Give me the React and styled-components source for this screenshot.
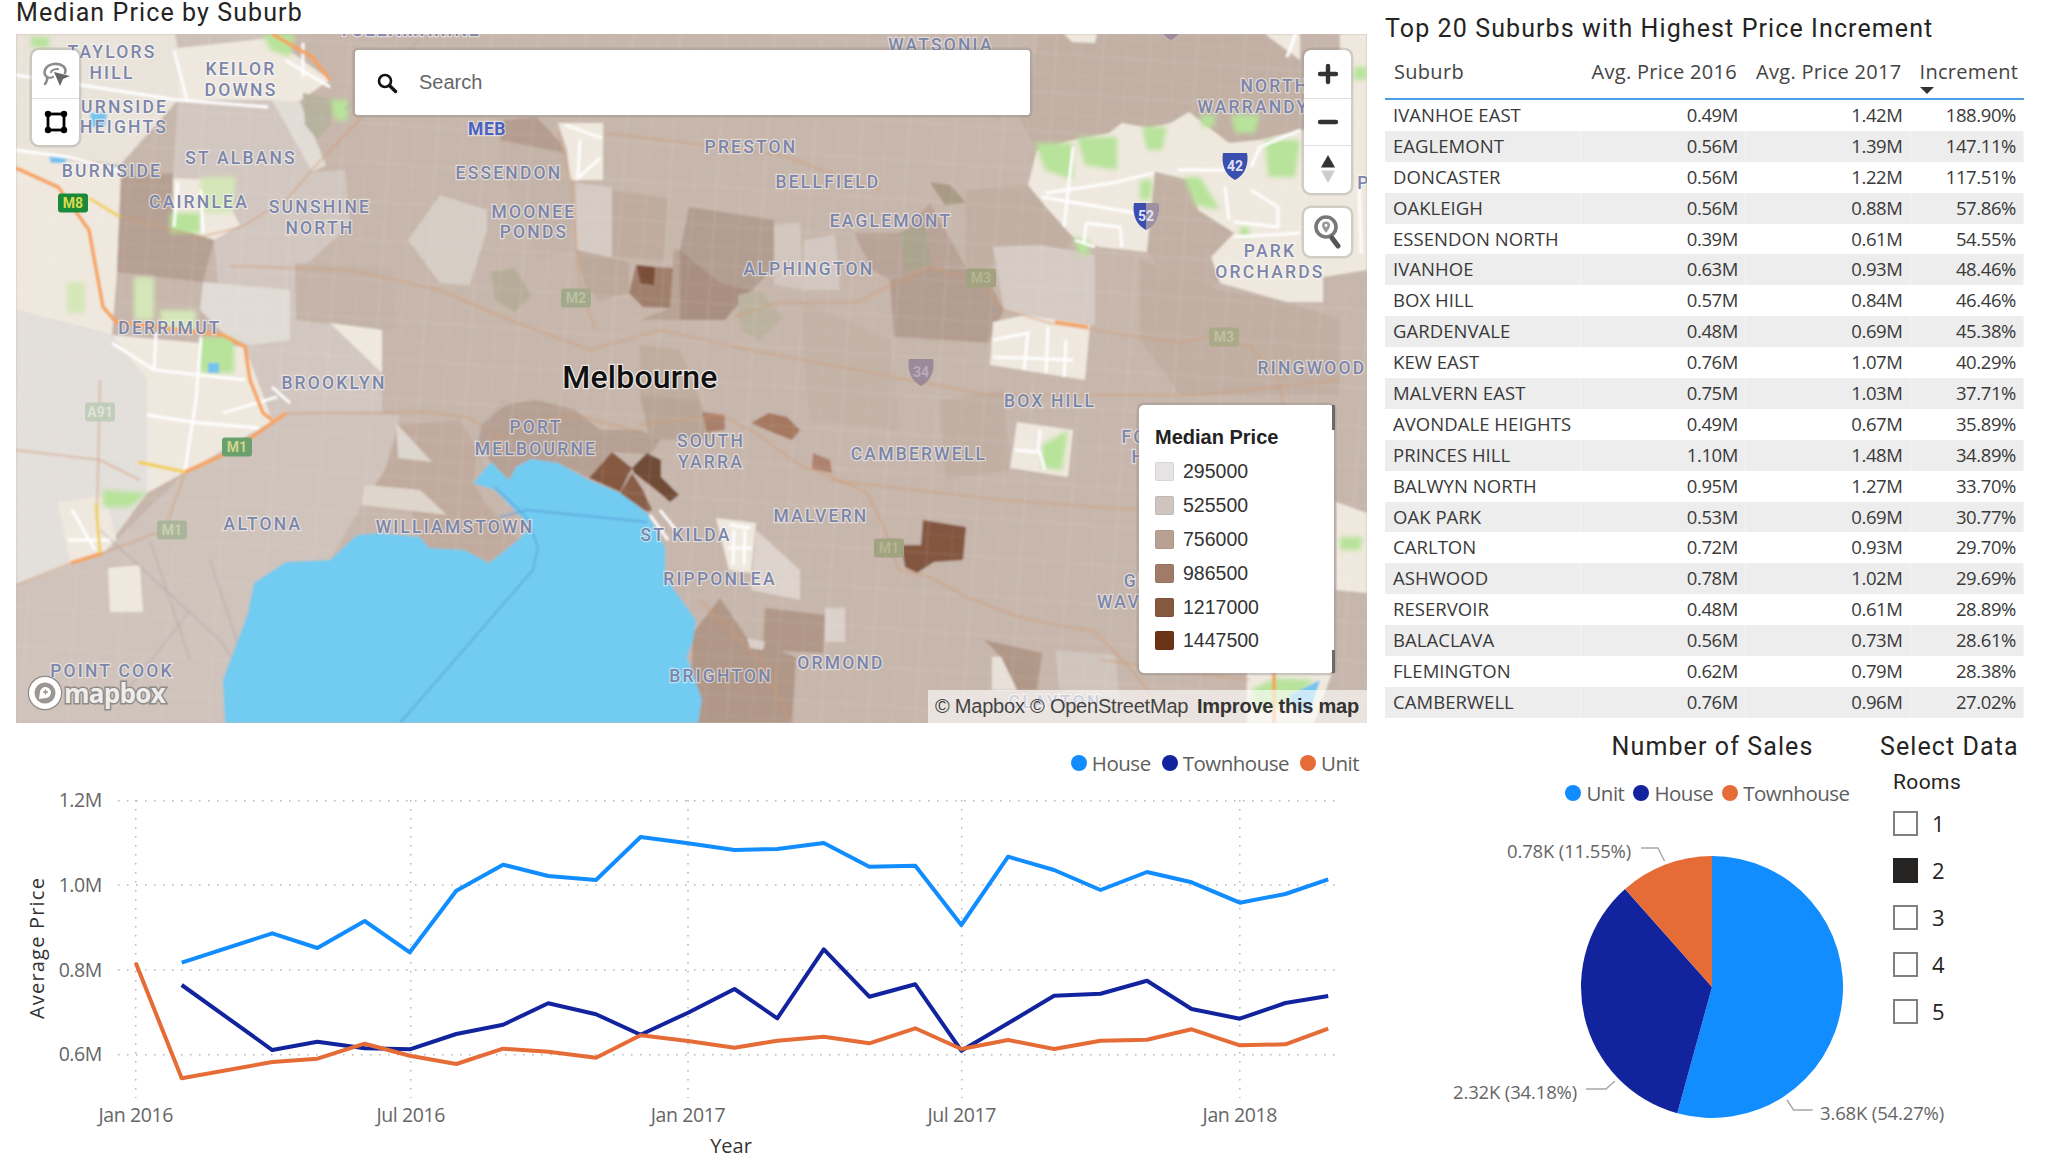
import React from 'react';
import styled, { createGlobalStyle } from 'styled-components';

const GlobalStyle = createGlobalStyle`
  html, body {
    margin: 0;
    padding: 0;
    background: #fff;
    font-family: "Open Sans", "Liberation Sans", sans-serif;
  }
`;

const HOUSE = '#118dff';
const NAVY = '#12239e';
const ORANGE = '#e66c37';

const suburbs = [
  ['IVANHOE EAST', '0.49M', '1.42M', '188.90%'],
  ['EAGLEMONT', '0.56M', '1.39M', '147.11%'],
  ['DONCASTER', '0.56M', '1.22M', '117.51%'],
  ['OAKLEIGH', '0.56M', '0.88M', '57.86%'],
  ['ESSENDON NORTH', '0.39M', '0.61M', '54.55%'],
  ['IVANHOE', '0.63M', '0.93M', '48.46%'],
  ['BOX HILL', '0.57M', '0.84M', '46.46%'],
  ['GARDENVALE', '0.48M', '0.69M', '45.38%'],
  ['KEW EAST', '0.76M', '1.07M', '40.29%'],
  ['MALVERN EAST', '0.75M', '1.03M', '37.71%'],
  ['AVONDALE HEIGHTS', '0.49M', '0.67M', '35.89%'],
  ['PRINCES HILL', '1.10M', '1.48M', '34.89%'],
  ['BALWYN NORTH', '0.95M', '1.27M', '33.70%'],
  ['OAK PARK', '0.53M', '0.69M', '30.77%'],
  ['CARLTON', '0.72M', '0.93M', '29.70%'],
  ['ASHWOOD', '0.78M', '1.02M', '29.69%'],
  ['RESERVOIR', '0.48M', '0.61M', '28.89%'],
  ['BALACLAVA', '0.56M', '0.73M', '28.61%'],
  ['FLEMINGTON', '0.62M', '0.79M', '28.38%'],
  ['CAMBERWELL', '0.76M', '0.96M', '27.02%']
];

const priceLegend = [
  ['295000', '#e6e4e2'],
  ['525500', '#cfc4be'],
  ['756000', '#b8a193'],
  ['986500', '#a07c68'],
  ['1217000', '#855840'],
  ['1447500', '#6c3317']
];

const months = [
  135.7, 181.7, 272.3, 317.4, 364.7, 409.8, 456.3, 503.1, 548.2, 596, 640.6,
  688, 734.5, 777.3, 823.8, 869.3, 915.3, 961.3, 1008.1, 1054.1, 1100.5, 1147,
  1191.6, 1239.8, 1285.4, 1328.2
];

const housePrices = [
  null, 962.7, 933.3, 948, 921, 952.3, 890.7, 864.7, 876, 880, 837, 843.3, 850,
  849, 843, 866.7, 865.7, 925, 856.7, 870, 890, 872, 882.3, 902.7, 894, 879.3
];
const townhousePrices = [
  null, 985, 1050, 1041.7, 1048.3, 1049.3, 1034, 1024.7, 1003.3, 1014.3,
  1034.7, 1012.7, 989, 1018.3, 949.3, 996.7, 984.3, 1050.7, 1023.3, 995.7,
  993.7, 980.7, 1009, 1018.7, 1003, 996
];
const unitPrices = [
  962.7, 1078.3, 1062, 1058.7, 1043.7, 1055.7, 1064, 1048.7, 1051.7, 1057.7,
  1035.3, 1041, 1047.7, 1040.7, 1036.7, 1043.3, 1028.3, 1049, 1040, 1049,
  1040.7, 1039.7, 1029.3, 1045.3, 1044.3, 1028.7
];

const toPoints = values =>
  values
    .map((y, i) => (y === null ? null : `${months[i]},${y}`))
    .filter(Boolean)
    .join(' ');

// [fill, polygon] in page pixels, painted back to front
const mapPatches = [
  ['#e9e3da', '16,34 185,34 178,100 120,165 16,150'],
  ['#cdc1b7', '175,34 272,34 300,60 178,50'],
  ['#efe8de', '178,48 272,38 330,80 292,106 178,100'],
  ['#efe8de', '16,150 121,170 117,272 112,335 16,310'],
  ['#e3dfda', '16,310 112,335 147,380 147,493 103,553 16,585'],
  ['#efe8de', '112,335 245,347 285,413 225,455 185,472 147,493 147,380'],
  ['#efe8de', '58,502 105,496 120,553 70,563'],
  ['#cfc3bb', '16,585 103,553 186,472 286,413 400,415 385,470 362,505 330,560 286,562 254,583 248,613 223,680 225,723 16,723'],
  ['#efe8de', '108,568 140,565 143,612 110,612'],
  ['#d2c7c0', '178,100 272,100 312,172 345,170 350,225 300,270 296,320 382,330 382,413 286,413 272,420 245,347 223,335 214,240 173,227 173,173'],
  ['#e1dbd6', '203,282 290,290 290,340 250,345 225,335 200,310'],
  ['#e1dcd6', '272,100 300,102 326,165 312,172'],
  ['#b7b29e', '303,93 335,100 330,125 318,140 305,125'],
  ['#efe8de', '173,178 215,180 240,225 214,240 173,227'],
  ['#b5a093', '121,177 173,173 173,227 214,240 203,282 117,272'],
  ['#c4b3a8', '295,263 392,268 395,330 330,323 296,320'],
  ['#efe8de', '330,323 382,330 382,373'],
  ['#d6cdc5', '408,240 440,195 487,210 487,230 470,285 440,283'],
  ['#d5cbc4', '576,183 612,187 612,257 576,250'],
  ['#c0ac9f', '612,190 668,198 664,262 612,257'],
  ['#c4b3a8', '500,140 565,153 576,183 576,250 540,260 520,210 505,180'],
  ['#b49c90', '500,140 504,120 536,117 558,140 565,153'],
  ['#efe8de', '558,123 603,123 603,180 570,180 567,150'],
  ['#bda99c', '576,250 629,262 629,293 600,300 586,290'],
  ['#b5ad99', '491,272 515,268 531,295 515,312 495,300'],
  ['#a07f6c', '636,265 656,267 674,268 670,308 643,307 629,293'],
  ['#794e37', '637,265 655,267 654,285 640,283'],
  ['#b8a395', '674,250 680,250 680,320 640,320 670,308'],
  ['#b29e91', '689,207 774,220 774,267 734,310 680,320 680,250'],
  ['#a98f81', '680,250 720,283 750,290 725,320 680,320'],
  ['#bbb3a0', '738,295 760,290 783,318 760,340 740,330'],
  ['#bfad9f', '640,345 680,350 700,400 640,395'],
  ['#d2c6be', '774,225 800,222 804,290 774,285'],
  ['#d3c8c1', '804,240 835,235 840,290 804,290'],
  ['#b9a398', '854,233 903,233 930,203 966,267 930,267 890,280 872,270'],
  ['#a89a84', '930,182 950,185 966,203 945,205'],
  ['#aba48e', '899,232 925,225 932,265 905,272'],
  ['#b39d90', '890,280 930,267 983,270 1004,310 988,343 894,337'],
  ['#c1afa3', '966,190 1028,185 1046,207 1073,237 1055,270 1030,250 983,270 966,267'],
  ['#d5cbc4', '993,247 1040,245 1095,255 1095,325 1040,320 1004,310'],
  ['#c2b0a4', '1040,34 1265,34 1300,60 1300,130 1260,140 1229,143 1216,133 1189,112 1171,123 1149,128 1122,123 1109,133 1073,140 1037,150 1020,120'],
  ['#efe8de', '1064,34 1097,34 1095,43 1072,42'],
  ['#efe8de', '1265,34 1300,34 1300,60'],
  ['#efe8de', '1028,185 1037,150 1073,140 1109,133 1122,123 1149,128 1171,123 1189,112 1216,133 1229,143 1260,140 1300,130 1367,130 1367,270 1323,277 1323,302 1287,302 1220,283 1211,257 1234,233 1198,210 1189,180 1155,172 1147,252 1100,247 1073,237 1046,207'],
  ['#efe8de', '1340,34 1367,34 1367,130 1340,130'],
  ['#c2b0a4', '1155,172 1189,180 1198,210 1234,233 1211,257 1220,283 1180,290 1147,252'],
  ['#efe8de', '993,322 1025,315 1090,325 1085,380 990,365'],
  ['#efe8de', '1017,422 1073,430 1068,477 1010,468'],
  ['#efe8de', '1336,502 1367,513 1367,593 1336,590'],
  ['#efe8de', '1247,673 1332,673 1314,723 1247,723'],
  ['#efe8de', '716,518 756,523 751,573 729,570'],
  ['#ddd3cc', '756,530 800,570 800,600 751,590'],
  ['#b09787', '765,608 825,615 823,653 763,650'],
  ['#dad1ca', '825,608 845,608 845,642 825,642'],
  ['#b09787', '720,598 747,638 796,657 792,723 689,723 693,633'],
  ['#d9d0c9', '747,638 765,642 763,650 750,648'],
  ['#b09787', '984,640 1042,653 1037,690 1017,690 1001,657'],
  ['#e8e1d9', '992,657 1001,657 1017,690 992,690'],
  ['#d0c5bd', '1055,650 1115,655 1120,700 1060,690'],
  ['#c1afa3', '940,400 1004,390 1010,470 945,480'],
  ['#c1afa3', '1140,260 1220,290 1287,302 1340,320 1340,395 1180,395 1140,340'],
  ['#c3b2a6', '800,300 890,340 900,430 810,420'],
  ['#b9a597', '640,395 700,400 712,440 650,440'],
  ['#b5a093', '482,425 505,405 536,400 575,410 600,430 640,430 660,440 650,455 612,452 589,478 558,463 531,459 516,467 509,480 491,462 478,445'],
  ['#c1ab9e', '385,470 400,425 460,420 478,450 473,483 487,505 500,520 518,540 489,563 464,550 429,548 420,537 410,510 362,505'],
  ['#ded5cb', '364,487 368,485 420,490 447,515 362,505'],
  ['#dcd6cf', '396,423 432,462 398,458'],
  ['#a97f6a', '702,412 725,415 725,430 707,432'],
  ['#a5785f', '751,423 769,413 787,417 800,430 792,440 774,433'],
  ['#ad816c', '813,453 830,460 832,473 812,469'],
  ['#855840', '589,478 612,452 632,468 620,492'],
  ['#8a5f49', '632,473 643,490 652,510 647,512 620,493'],
  ['#6f4c36', '632,468 647,453 661,460 661,477 679,495 670,502 656,490 634,473'],
  ['#835640', '923,520 966,527 963,560 934,562 917,573 905,567 901,545 888,537 903,545 921,545']
];

const parkPatches = [
  '200,337 234,337 234,373 200,373',
  '103,490 147,493 130,507 103,507',
  '170,213 200,213 200,233 170,233',
  '263,34 295,34 290,57 270,50',
  '330,100 348,100 348,120 335,120',
  '31,37 49,37 49,47 31,47',
  '1035,143 1073,143 1073,180 1045,170',
  '1077,137 1117,137 1117,170 1085,165',
  '1142,127 1167,127 1162,150 1147,150',
  '1200,115 1216,115 1213,127 1202,127',
  '1231,115 1260,115 1255,133 1235,133',
  '1184,177 1200,177 1220,210 1195,205',
  '1265,140 1300,140 1295,177 1268,177',
  '1240,227 1249,227 1249,237 1240,237',
  '1354,67 1367,67 1367,80 1354,80',
  '1073,237 1090,240 1088,257 1078,252',
  '1140,180 1153,180 1150,200 1140,200',
  '1042,445 1068,430 1062,470 1042,468',
  '1340,537 1363,537 1360,550 1340,550',
  '1251,690 1275,678 1314,680 1290,705 1255,712'
];

const paleParks = [
  '200,177 236,177 232,213 200,213',
  '67,282 85,282 85,313 67,313',
  '134,277 154,277 154,320 134,320',
  '160,310 196,310 196,330 160,330'
];

const lakes = [
  '90,113 107,113 105,127 92,127',
  '49,157 67,157 65,163 51,163',
  '208,363 219,363 219,373 208,373',
  '1290,695 1320,680 1310,712 1295,712'
];

const whiteRoads = [
  '112,343 154,370 245,380',
  '156,333 154,370',
  '201,337 196,400 185,470',
  '147,415 192,422 259,428',
  '223,413 277,397',
  '272,387 290,403',
  '16,75 178,100 268,107',
  '174,50 187,100',
  '303,43 303,77',
  '285,60 330,87',
  '16,150 67,157 120,170',
  '178,182 174,227',
  '201,190 203,233',
  '1073,147 1064,227',
  '1042,197 1135,213',
  '1046,193 1113,183 1153,173',
  '1086,223 1084,243',
  '1086,223 1120,227 1122,247',
  '1075,240 1095,247',
  '1178,170 1225,170',
  '1225,187 1229,220',
  '1251,167 1260,147 1300,130',
  '1251,190 1278,207 1278,227 1234,222',
  '1234,237 1300,233',
  '1296,33 1287,57',
  '1359,180 1361,253',
  '993,340 1028,333 1024,370',
  '1048,327 1046,373',
  '1066,340 1064,377',
  '993,357 1073,360',
  '1015,450 1040,452 1045,470',
  '1040,430 1038,452',
  '565,125 602,138',
  '580,140 578,178 600,158',
  '730,525 750,528',
  '734,530 733,565',
  '745,530 744,565',
  '728,548 752,548',
  '68,540 110,540',
  '72,510 95,550',
  '650,515 668,540',
  '660,510 676,530'
];

const motorways = [
  '16,168 58,187 89,230 103,307 116,322 223,335 245,347 250,380 263,413 272,420',
  '272,34 312,57 330,80',
  '286,413 255,435 223,455 185,472',
  '71,563 103,553',
  '1055,322 1088,327',
  '1274,673 1274,723'
];

const fadedRoads = [
  '120,217 201,237 241,227 286,200 321,160 362,117',
  '16,585 71,563 103,553 165,530 185,472',
  '286,413 429,412 469,418 500,437 540,420 575,415 640,432',
  '558,133 571,180 580,283 595,330',
  '734,317 778,303 858,302 894,283 930,267 984,283 1004,310 1050,323 1180,343 1207,337 1251,347 1278,377 1290,440',
  '832,477 867,493 885,530 899,570 930,577 966,597 1019,617 1095,632 1126,663 1153,697',
  '640,425 720,415 751,430 800,465 832,477',
  '606,133 780,155 880,190',
  '230,266 350,270 440,290 510,320 590,350 660,330 750,350 990,395 1200,395 1340,380',
  '830,480 1000,500 1140,510',
  '700,600 760,660 790,720',
  '1100,660 1250,680',
  '100,380 97,520',
  '16,450 100,460 140,480'
];

const greyRoads = [
  '505,400 482,425 478,455 490,490',
  '100,530 220,640 260,700',
  '150,540 190,660',
  '190,610 120,700',
  '210,560 240,650',
  '345,110 420,40',
  '900,40 1000,120'
];

const mapLabels = [
  ['TAYLORS', 112, 52],
  ['HILL', 112, 73],
  ['KEILOR', 241, 69],
  ['DOWNS', 241, 90],
  ['BURNSIDE', 118, 107],
  ['HEIGHTS', 124, 127],
  ['BURNSIDE', 112, 171],
  ['ST ALBANS', 241, 158],
  ['CAIRNLEA', 199, 202],
  ['SUNSHINE', 320, 207],
  ['NORTH', 320, 228],
  ['ESSENDON', 509, 173],
  ['MOONEE', 534, 212],
  ['PONDS', 534, 232],
  ['DERRIMUT', 170, 328],
  ['BROOKLYN', 334, 383],
  ['WATSONIA', 941, 45],
  ['PRESTON', 751, 147],
  ['BELLFIELD', 828, 182],
  ['EAGLEMONT', 891, 221],
  ['ALPHINGTON', 809, 269],
  ['NORTH', 1275, 86],
  ['WARRANDYTE', 1266, 107],
  ['PARK', 1270, 251],
  ['ORCHARDS', 1270, 272],
  ['P', 1364, 183],
  ['RINGWOOD', 1312, 368],
  ['BOX HILL', 1050, 401],
  ['ALTONA', 263, 524],
  ['WILLIAMSTOWN', 455, 527],
  ['PORT', 536, 427],
  ['MELBOURNE', 536, 449],
  ['POINT COOK', 112, 671],
  ['ST KILDA', 686, 535],
  ['SOUTH', 711, 441],
  ['YARRA', 711, 462],
  ['CAMBERWELL', 919, 454],
  ['MALVERN', 821, 516],
  ['RIPPONLEA', 720, 579],
  ['BRIGHTON', 721, 676],
  ['ORMOND', 841, 663],
  ['FOREST', 1160, 437],
  ['HILL', 1154, 457],
  ['GLEN', 1150, 581],
  ['WAVERLEY', 1150, 602],
  ['CLAYTON', 1055, 702],
  ['TULLAMARINE', 410, 30]
];

const greenShields = [
  ['M8', 73, 203, '#1a8a3a', '#dbd94f'],
  ['M1', 237, 447, '#6aa06e', '#cfd58c'],
  ['M1', 172, 530, '#abb59c', '#c9d0ad'],
  ['A91', 100, 412, '#c3cdbc', '#dde3d6'],
  ['M2', 576, 298, '#a3a98b', '#bcc2a2'],
  ['M3', 981, 278, '#a3a280', '#b5b593'],
  ['M3', 1224, 337, '#aaa988', '#c0c0a0'],
  ['M1', 889, 548, '#a3a280', '#b5b593']
];

const Page = styled.div`
  display: grid;
  grid-template-columns: 1351px 639px;
  column-gap: 18px;
  width: 2049px;
  height: 1164px;
  padding-left: 16px;
  box-sizing: border-box;
  overflow: hidden;
  color: #252423;
`;

const Column = styled.div`
  display: flex;
  flex-direction: column;
  min-width: 0;
`;

const VisualTitle = styled.h2`
  margin: 0;
  font-family: Roboto, "Liberation Sans", sans-serif;
  font-weight: 400;
  font-size: 25px;
  letter-spacing: 1.1px;
  color: #252423;
  white-space: nowrap;
`;

const MapTitle = styled(VisualTitle)`
  height: 34px;
  line-height: 26px;
`;

const TableTitle = styled(VisualTitle)`
  height: 30px;
  margin-top: 14px;
  line-height: 30px;
`;

const MapFrame = styled.div`
  position: relative;
  height: 689px;
  overflow: hidden;
  background: #c7b6ab;
`;

const MapArt = styled.svg`
  display: block;
  width: 1351px;
  height: 689px;
`;

const PlaceLabel = styled.text`
  font-family: Roboto, "Liberation Sans", sans-serif;
  font-size: 17.5px;
  font-weight: 500;
  letter-spacing: 2.2px;
  fill: #7c86aa;
  stroke: rgba(255, 255, 255, 0.5);
  stroke-width: 2.5px;
  paint-order: stroke;
  text-anchor: middle;
  dominant-baseline: central;
`;

const CityLabel = styled(PlaceLabel)`
  font-size: 32px;
  letter-spacing: 0.2px;
  fill: #111;
  stroke: rgba(255, 255, 255, 0.7);
`;

const AirportLabel = styled(PlaceLabel)`
  font-weight: 700;
  letter-spacing: 0.5px;
  fill: #4a61c4;
`;

const ShieldText = styled.text`
  font-family: Roboto, "Liberation Sans", sans-serif;
  font-size: 14px;
  font-weight: 700;
  text-anchor: middle;
  dominant-baseline: central;
`;

const ControlGroup = styled.div`
  position: absolute;
  top: 16px;
  width: 47px;
  display: flex;
  flex-direction: column;
  background: #fff;
  border-radius: 7px;
  box-shadow: 0 0 0 2.5px rgba(120, 120, 120, 0.25);
  left: ${p => p.$left}px;
`;

const PinGroup = styled(ControlGroup)`
  top: 174px;
`;

const ControlButton = styled.div`
  height: 47.5px;
  display: flex;
  align-items: center;
  justify-content: center;
  border-top: ${p => (p.$first ? 'none' : '1px solid #ddd')};
  box-sizing: border-box;
`;

const SearchBox = styled.div`
  position: absolute;
  left: 339px;
  top: 16px;
  width: 675px;
  height: 65px;
  display: flex;
  align-items: center;
  gap: 21px;
  padding-left: 21px;
  box-sizing: border-box;
  background: #fff;
  border-radius: 3px;
  box-shadow: 0 0 0 2.5px rgba(120, 120, 120, 0.25);
  font-family: "Liberation Sans", Arial, sans-serif;
  font-size: 20px;
  color: #666;
`;

const PriceLegend = styled.div`
  position: absolute;
  left: 1123px;
  top: 371px;
  width: 195px;
  height: 268px;
  padding: 21px 0 0 16px;
  box-sizing: border-box;
  background: #fff;
  border-radius: 5px;
  box-shadow: 0 0 0 2.5px rgba(120, 120, 120, 0.25);
  font-family: "Liberation Sans", Arial, sans-serif;

  &::before,
  &::after {
    content: '';
    position: absolute;
    right: -1px;
    width: 3px;
    background: #6a6a6a;
  }
  &::before {
    top: 0;
    height: 25px;
  }
  &::after {
    bottom: 0;
    height: 23px;
  }
`;

const PriceLegendTitle = styled.div`
  font-weight: 700;
  font-size: 20px;
  line-height: 22px;
  margin-bottom: 7px;
  color: #222;
`;

const PriceItem = styled.div`
  display: flex;
  align-items: center;
  gap: 9px;
  height: 33.8px;
  font-size: 19.5px;
  color: #333;
`;

const Swatch = styled.span`
  width: 19px;
  height: 19px;
  border-radius: 2px;
  box-shadow: inset 0 0 0 1px rgba(0, 0, 0, 0.06);
  background: ${p => p.$color};
`;

const Attribution = styled.div`
  position: absolute;
  right: 0;
  bottom: 0;
  height: 33px;
  width: 439px;
  display: flex;
  align-items: center;
  justify-content: space-between;
  padding: 0 8px 0 7px;
  box-sizing: border-box;
  background: rgba(255, 255, 255, 0.62);
  font-family: "Liberation Sans", Arial, sans-serif;
  font-size: 20px;
  letter-spacing: -0.22px;
  color: #444;
  white-space: nowrap;
`;

const ImproveLink = styled.b`
  color: #333;
`;

const MapboxMark = styled.div`
  position: absolute;
  left: 10px;
  bottom: 11px;
  display: flex;
  align-items: center;
  font-family: "Open Sans", sans-serif;
  font-size: 26px;
  line-height: 28px;
  font-weight: 700;
  letter-spacing: -0.7px;
  color: #efedeb;
  -webkit-text-stroke: 3px #8f8b89;
  paint-order: stroke fill;
`;

const ChartLegend = styled.div`
  display: flex;
  justify-content: ${p => p.$justify || 'flex-end'};
  align-items: center;
  gap: 11px;
  height: 24px;
  font-size: 20.5px;
  letter-spacing: -0.5px;
  color: #605e5c;
  white-space: nowrap;
`;

const LineLegend = styled(ChartLegend)`
  margin-top: 28px;
  padding-right: 8px;
`;

const LegendItem = styled.span`
  display: inline-flex;
  align-items: center;
  gap: 5px;

  &::before {
    content: '';
    width: 16px;
    height: 16px;
    border-radius: 50%;
    background: ${p => p.$color};
  }
`;

const ChartSvg = styled.svg`
  display: block;
  flex: none;
  overflow: visible;
`;

const AxisText = styled.text`
  font-family: "Open Sans", sans-serif;
  font-size: 19.5px;
  letter-spacing: -0.4px;
  fill: #666;
  dominant-baseline: central;
`;

const AxisTitle = styled.text`
  font-family: "Open Sans", sans-serif;
  font-size: 20px;
  fill: #333;
  dominant-baseline: central;
  text-anchor: middle;
`;

const PriceAxisTitle = styled(AxisTitle)`
  letter-spacing: 1.2px;
`;

const Table = styled.div`
  display: flex;
  flex-direction: column;
  margin-top: 14px;
  font-size: 18.5px;
  color: #3a3a3a;
`;

const rowColumns = `196px 165px 164.5px 113.5px`;

const HeaderRow = styled.div`
  display: grid;
  grid-template-columns: ${rowColumns};
  height: 42px;
  box-sizing: border-box;
  border-bottom: 2px solid #4a9fe8;
  font-size: 20px;
  letter-spacing: 0.3px;
  line-height: 28px;
  color: #444;
`;

const HeaderCell = styled.div`
  position: relative;
  padding: 0 9px;
  white-space: nowrap;
  text-align: ${p => (p.$left ? 'left' : 'right')};
`;

const SortArrow = styled.span`
  position: absolute;
  left: 9px;
  top: 29px;
  border-left: 7px solid transparent;
  border-right: 7px solid transparent;
  border-top: 7px solid #333;
`;

const DataRow = styled.div`
  display: grid;
  grid-template-columns: ${rowColumns};
  height: 30.9px;
  line-height: 30.9px;
  background: ${p => (p.$shaded ? '#ededed' : '#fff')};
`;

const DataCell = styled.div`
  padding: 0 ${p => (p.$left ? 8 : 7)}px;
  text-align: ${p => (p.$left ? 'left' : 'right')};
  letter-spacing: ${p => (p.$left ? 0.05 : -0.4)}px;
  white-space: nowrap;
  border-right: 1px solid rgba(255, 255, 255, 0.5);
`;

const BottomRow = styled.div`
  display: grid;
  grid-template-columns: 495px 144px;
`;

const PiePanel = styled.div`
  display: flex;
  flex-direction: column;
`;

const PieTitle = styled(VisualTitle)`
  height: 30px;
  margin-top: 14px;
  padding-left: 160px;
  line-height: 30px;
  text-align: center;
`;

const PieLegend = styled(ChartLegend)`
  margin-top: 19px;
  padding-left: 150px;
  gap: 9px;
`;

const PieLabel = styled.text`
  font-family: "Open Sans", sans-serif;
  font-size: 18.5px;
  letter-spacing: -0.15px;
  fill: #666;
  dominant-baseline: central;
`;

const Slicer = styled.div`
  display: flex;
  flex-direction: column;
`;

const SlicerTitle = styled(VisualTitle)`
  height: 30px;
  margin-top: 14px;
  line-height: 30px;
`;

const SlicerHeader = styled.div`
  margin: 8px 0 6px 13px;
  height: 24px;
  line-height: 24px;
  font-family: Roboto, sans-serif;
  font-size: 21px;
  letter-spacing: 0.4px;
`;

const SlicerRow = styled.div`
  display: flex;
  align-items: center;
  gap: 14px;
  height: 47px;
  margin-left: 13px;
  font-size: 22px;
`;

const Checkbox = styled.span`
  width: 25px;
  height: 25px;
  box-sizing: border-box;
  border: 2px solid ${p => (p.$checked ? '#252423' : '#808080')};
  background: ${p => (p.$checked ? '#252423' : '#fff')};
`;

function LassoIcon() {
  return (
    <svg width="32" height="26" viewBox="0 0 32 26" fill="none">
      <path
        d="M5 23 C 7 20 8 19 7 16 C 2 12 5 4 14 3 C 22 2 27 7 25 12"
        stroke="#8c8c8c"
        strokeWidth="2.6"
        strokeLinecap="round"
      />
      <path
        d="M7 16 C 9 17 11 17 13 16 M11 11 C 12 9 15 8 18 8"
        stroke="#8c8c8c"
        strokeWidth="2.2"
        strokeLinecap="round"
      />
      <path d="M14 11 L30 15 L23 18 L20 25 Z" fill="#666" />
    </svg>
  );
}

function BoxSelectIcon() {
  return (
    <svg width="26" height="26" viewBox="0 0 26 26" fill="none">
      <rect x="5" y="5" width="16" height="16" stroke="#000" strokeWidth="2.8" />
      <circle cx="5" cy="5" r="3.2" fill="#000" />
      <circle cx="21" cy="5" r="3.2" fill="#000" />
      <circle cx="5" cy="21" r="3.2" fill="#000" />
      <circle cx="21" cy="21" r="3.2" fill="#000" />
    </svg>
  );
}

function SearchIcon() {
  return (
    <svg width="22" height="22" viewBox="0 0 22 22" fill="none">
      <circle cx="9" cy="9" r="6" stroke="#111" strokeWidth="2.6" />
      <path d="M13.5 13.5 L19.5 19.5" stroke="#111" strokeWidth="3.4" strokeLinecap="round" />
    </svg>
  );
}

function PlusIcon() {
  return (
    <svg width="22" height="24" viewBox="0 0 22 24">
      <path d="M11 4 V20 M3 12 H19" stroke="#333" strokeWidth="4.4" strokeLinecap="round" />
    </svg>
  );
}

function MinusIcon() {
  return (
    <svg width="22" height="24" viewBox="0 0 22 24">
      <path d="M3 12 H19" stroke="#333" strokeWidth="4.4" strokeLinecap="round" />
    </svg>
  );
}

function CompassIcon() {
  return (
    <svg width="14" height="30" viewBox="0 0 14 30">
      <path d="M7 1 L14 13.5 H0 Z" fill="#333" />
      <path d="M7 29 L14 16.5 H0 Z" fill="#ccc" />
    </svg>
  );
}

function PinSearchIcon() {
  return (
    <svg width="28" height="34" viewBox="0 0 28 34" fill="none">
      <circle cx="12" cy="12" r="10" stroke="#777" strokeWidth="3.6" />
      <path
        d="M12 18 C 9 14 8 12 8 10.5 A4 4 0 1 1 16 10.5 C 16 12 15 14 12 18 Z"
        fill="#999"
      />
      <circle cx="12" cy="10.5" r="1.4" fill="#fff" />
      <path d="M18 23 L24 31" stroke="#555" strokeWidth="5" strokeLinecap="round" />
    </svg>
  );
}

function MapboxLogo() {
  return (
    <svg width="38" height="38" viewBox="0 0 38 38">
      <circle cx="19" cy="19" r="16" fill="#fff" stroke="#8f8b89" strokeWidth="2.5" />
      <circle cx="19" cy="19" r="10.5" fill="#9a9694" />
      <path d="M13 25 L14 18 A5.5 5.5 0 1 1 20 24 Z" fill="#fff" />
      <path d="M19.5 15.5 V20.5 M17 18 H22" stroke="#9a9694" strokeWidth="1.6" />
    </svg>
  );
}

const shieldPath = (x, y) =>
  `M${x - 12} ${y - 13} H${x + 12} C${x + 14} ${y - 2} ${x + 10} ${y + 9} ${x} ${y + 14} C${x - 10} ${y + 9} ${x - 14} ${y - 2} ${x - 12} ${y - 13} Z`;

function Shield({ x, y, label, fill, textFill, halfFill }) {
  return (
    <g>
      <path d={shieldPath(x, y)} fill={fill} />
      {halfFill && (
        <path
          d={`M${x} ${y - 13} H${x + 12} C${x + 14} ${y - 2} ${x + 10} ${y + 9} ${x} ${y + 14} Z`}
          fill={halfFill}
        />
      )}
      <ShieldText x={x} y={y} fill={textFill}>
        {label}
      </ShieldText>
    </g>
  );
}

function RoadLayer({ lines, stroke, width, opacity = 1 }) {
  return lines.map((points, i) => (
    <polyline
      key={i}
      points={points}
      fill="none"
      stroke={stroke}
      strokeOpacity={opacity}
      strokeWidth={width}
    />
  ));
}

function BaseMap() {
  return (
    <MapArt viewBox="16 34 1351 689" preserveAspectRatio="none">
      <defs>
        <filter id="soften" x="-2%" y="-2%" width="104%" height="104%">
          <feGaussianBlur stdDeviation="1.1" />
        </filter>
        <filter id="softenParks" x="-20%" y="-20%" width="140%" height="140%">
          <feGaussianBlur stdDeviation="2.2" />
        </filter>
        <pattern
          id="streets"
          width="47"
          height="39"
          patternUnits="userSpaceOnUse"
          patternTransform="rotate(4)"
        >
          <path
            d="M0 0 H47 M0 0 V39 M23 0 V39 M0 19 H47"
            stroke="#fff"
            strokeOpacity="0.13"
            strokeWidth="1.2"
            fill="none"
          />
        </pattern>
      </defs>
      <g filter="url(#soften)">
        <rect x="16" y="34" width="1351" height="689" fill="#c7b6ab" />
        {mapPatches.map(([fill, points], i) => (
          <polygon key={i} points={points} fill={fill} />
        ))}
        <rect x="16" y="34" width="1351" height="689" fill="url(#streets)" />
        <g filter="url(#softenParks)">
          {parkPatches.map((points, i) => (
            <polygon key={i} points={points} fill="#b7e39a" />
          ))}
          {paleParks.map((points, i) => (
            <polygon key={i} points={points} fill="#d5e6b8" />
          ))}
        </g>
        {lakes.map((points, i) => (
          <polygon key={i} points={points} fill="#74c4ee" />
        ))}
        <RoadLayer lines={greyRoads} stroke="#a9a6a6" width={1.8} opacity={0.4} />
        <RoadLayer lines={fadedRoads} stroke="#d39a76" width={2.6} opacity={0.4} />
        <RoadLayer lines={whiteRoads} stroke="#fff" width={2.8} />
        <RoadLayer lines={motorways} stroke="#f6a25c" width={3.6} />
        <polyline points="89,198 120,217" fill="none" stroke="#f2d05a" strokeWidth="3" />
        <polyline points="138,462 185,472" fill="none" stroke="#f2d05a" strokeWidth="3.6" />
        <polyline points="96,503 100,553" fill="none" stroke="#f2d05a" strokeWidth="3" />
        <polygon
          points="225,723 223,680 248,613 254,583 286,562 330,560 357,535 380,533 420,537 429,548 464,550 489,563 518,540 531,527 495,490 473,483 491,462 509,480 516,467 531,459 558,463 589,480 620,493 647,513 665,547 665,577 696,620 693,640 687,657 702,700 698,723"
          fill="#72cbf0"
        />
        <polyline
          points="400,723 533,570 538,547 527,518 495,487"
          fill="none"
          stroke="#5aa3dc"
          strokeWidth="1.3"
        />
        <polyline
          points="500,517 527,510 647,522"
          fill="none"
          stroke="#5aa3dc"
          strokeWidth="1.3"
        />
      </g>
      {greenShields.map(([label, x, y, fill, textFill], i) => (
        <g key={i}>
          <rect x={x - 15} y={y - 9.5} width="30" height="19" rx="3" fill={fill} />
          <ShieldText x={x} y={y} fill={textFill}>
            {label}
          </ShieldText>
        </g>
      ))}
      <Shield x={1235} y={166} label="42" fill="#3a4fae" textFill="#dfe3f5" />
      <Shield x={1146} y={216} label="52" fill="#3a4fae" textFill="#dfe3f5" halfFill="#a090a4" />
      <Shield x={921} y={372} label="34" fill="#9a8a9a" textFill="#b9adb9" />
      <Shield x={1171} y={26} label="" fill="#9a8a9a" />
      {mapLabels.map(([label, x, y], i) => (
        <PlaceLabel key={i} x={x} y={y}>
          {label}
        </PlaceLabel>
      ))}
      <AirportLabel x={487} y={129}>MEB</AirportLabel>
      <CityLabel x={640} y={377}>Melbourne</CityLabel>
    </MapArt>
  );
}

function MedianPriceMap() {
  return (
    <MapFrame>
      <BaseMap />
      <ControlGroup $left={16}>
        <ControlButton $first>
          <LassoIcon />
        </ControlButton>
        <ControlButton>
          <BoxSelectIcon />
        </ControlButton>
      </ControlGroup>
      <SearchBox>
        <SearchIcon />
        <span>Search</span>
      </SearchBox>
      <ControlGroup $left={1288}>
        <ControlButton $first>
          <PlusIcon />
        </ControlButton>
        <ControlButton>
          <MinusIcon />
        </ControlButton>
        <ControlButton>
          <CompassIcon />
        </ControlButton>
      </ControlGroup>
      <PinGroup $left={1288}>
        <ControlButton $first>
          <PinSearchIcon />
        </ControlButton>
      </PinGroup>
      <PriceLegend>
        <PriceLegendTitle>Median Price</PriceLegendTitle>
        {priceLegend.map(([value, color]) => (
          <PriceItem key={value}>
            <Swatch $color={color} />
            {value}
          </PriceItem>
        ))}
      </PriceLegend>
      <MapboxMark>
        <MapboxLogo />
        <span>mapbox</span>
      </MapboxMark>
      <Attribution>
        <span>© Mapbox © OpenStreetMap</span>
        <ImproveLink>Improve this map</ImproveLink>
      </Attribution>
    </MapFrame>
  );
}

function PriceTrend() {
  const yTicks = [
    ['1.2M', 800.7],
    ['1.0M', 885],
    ['0.8M', 970],
    ['0.6M', 1054.7]
  ];
  const xTicks = [
    ['Jan 2016', 135.7],
    ['Jul 2016', 410.7],
    ['Jan 2017', 688],
    ['Jul 2017', 961.7],
    ['Jan 2018', 1239.8]
  ];
  return (
    <>
      <LineLegend>
        <LegendItem $color={HOUSE}>House</LegendItem>
        <LegendItem $color={NAVY}>Townhouse</LegendItem>
        <LegendItem $color={ORANGE}>Unit</LegendItem>
      </LineLegend>
      <ChartSvg width="1351" height="389" viewBox="16 775 1351 389">
        {yTicks.map(([label, y]) => (
          <g key={label}>
            <line x1="118" x2="1341" y1={y} y2={y} stroke="#b5b5b5" strokeWidth="1.5" strokeDasharray="1.5 7.5" />
            <AxisText x="102" y={y - 1} textAnchor="end">{label}</AxisText>
          </g>
        ))}
        {xTicks.map(([label, x]) => (
          <g key={label}>
            <line x1={x} x2={x} y1="800" y2="1098" stroke="#b5b5b5" strokeWidth="1.5" strokeDasharray="1.5 7.5" />
            <AxisText x={x} y="1114" textAnchor="middle">{label}</AxisText>
          </g>
        ))}
        <polyline points={toPoints(housePrices)} fill="none" stroke={HOUSE} strokeWidth="4" strokeLinejoin="round" />
        <polyline points={toPoints(townhousePrices)} fill="none" stroke={NAVY} strokeWidth="4" strokeLinejoin="round" />
        <polyline points={toPoints(unitPrices)} fill="none" stroke={ORANGE} strokeWidth="4" strokeLinejoin="round" />
        <AxisTitle x="731" y="1145">Year</AxisTitle>
        <PriceAxisTitle transform="rotate(-90 36 948)" x="36" y="948">Average Price</PriceAxisTitle>
      </ChartSvg>
    </>
  );
}

function SuburbTable() {
  return (
    <Table>
      <HeaderRow>
        <HeaderCell $left>Suburb</HeaderCell>
        <HeaderCell>Avg. Price 2016</HeaderCell>
        <HeaderCell>Avg. Price 2017</HeaderCell>
        <HeaderCell>
          Increment
          <SortArrow />
        </HeaderCell>
      </HeaderRow>
      {suburbs.map((row, i) => (
        <DataRow key={row[0]} $shaded={i % 2 === 1}>
          {row.map((value, c) => (
            <DataCell key={c} $left={c === 0}>
              {value}
            </DataCell>
          ))}
        </DataRow>
      ))}
    </Table>
  );
}

function piePath(from, to) {
  const cx = 1712;
  const cy = 987;
  const r = 131;
  const point = share => {
    const a = share * 2 * Math.PI;
    return `${cx + r * Math.sin(a)} ${cy - r * Math.cos(a)}`;
  };
  const large = to - from > 0.5 ? 1 : 0;
  return `M${cx} ${cy} L${point(from)} A${r} ${r} 0 ${large} 1 ${point(to)} Z`;
}

function SalesPie() {
  return (
    <PiePanel>
      <PieTitle>Number of Sales</PieTitle>
      <PieLegend $justify="center">
        <LegendItem $color={HOUSE}>Unit</LegendItem>
        <LegendItem $color={NAVY}>House</LegendItem>
        <LegendItem $color={ORANGE}>Townhouse</LegendItem>
      </PieLegend>
      <ChartSvg width="495" height="359" viewBox="1385 805 495 359">
        <path d={piePath(0, 0.5427)} fill={HOUSE} />
        <path d={piePath(0.5427, 0.8845)} fill={NAVY} />
        <path d={piePath(0.8845, 1)} fill={ORANGE} />
        <polyline points="1641,848 1658,848 1664.5,861" fill="none" stroke="#a6a6a6" strokeWidth="1.4" />
        <polyline points="1586,1089 1606,1089 1615,1081" fill="none" stroke="#a6a6a6" strokeWidth="1.4" />
        <polyline points="1787,1100 1793.6,1110 1812.6,1110" fill="none" stroke="#a6a6a6" strokeWidth="1.4" />
        <PieLabel x="1507" y="850">0.78K (11.55%)</PieLabel>
        <PieLabel x="1453" y="1091">2.32K (34.18%)</PieLabel>
        <PieLabel x="1820" y="1112">3.68K (54.27%)</PieLabel>
      </ChartSvg>
    </PiePanel>
  );
}

function RoomsSlicer() {
  return (
    <Slicer>
      <SlicerTitle>Select Data</SlicerTitle>
      <SlicerHeader>Rooms</SlicerHeader>
      {[1, 2, 3, 4, 5].map(n => (
        <SlicerRow key={n}>
          <Checkbox $checked={n === 2} />
          {n}
        </SlicerRow>
      ))}
    </Slicer>
  );
}

export default function App() {
  return (
    <Page>
      <GlobalStyle />
      <Column>
        <MapTitle>Median Price by Suburb</MapTitle>
        <MedianPriceMap />
        <PriceTrend />
      </Column>
      <Column>
        <TableTitle>Top 20 Suburbs with Highest Price Increment</TableTitle>
        <SuburbTable />
        <BottomRow>
          <SalesPie />
          <RoomsSlicer />
        </BottomRow>
      </Column>
    </Page>
  );
}
